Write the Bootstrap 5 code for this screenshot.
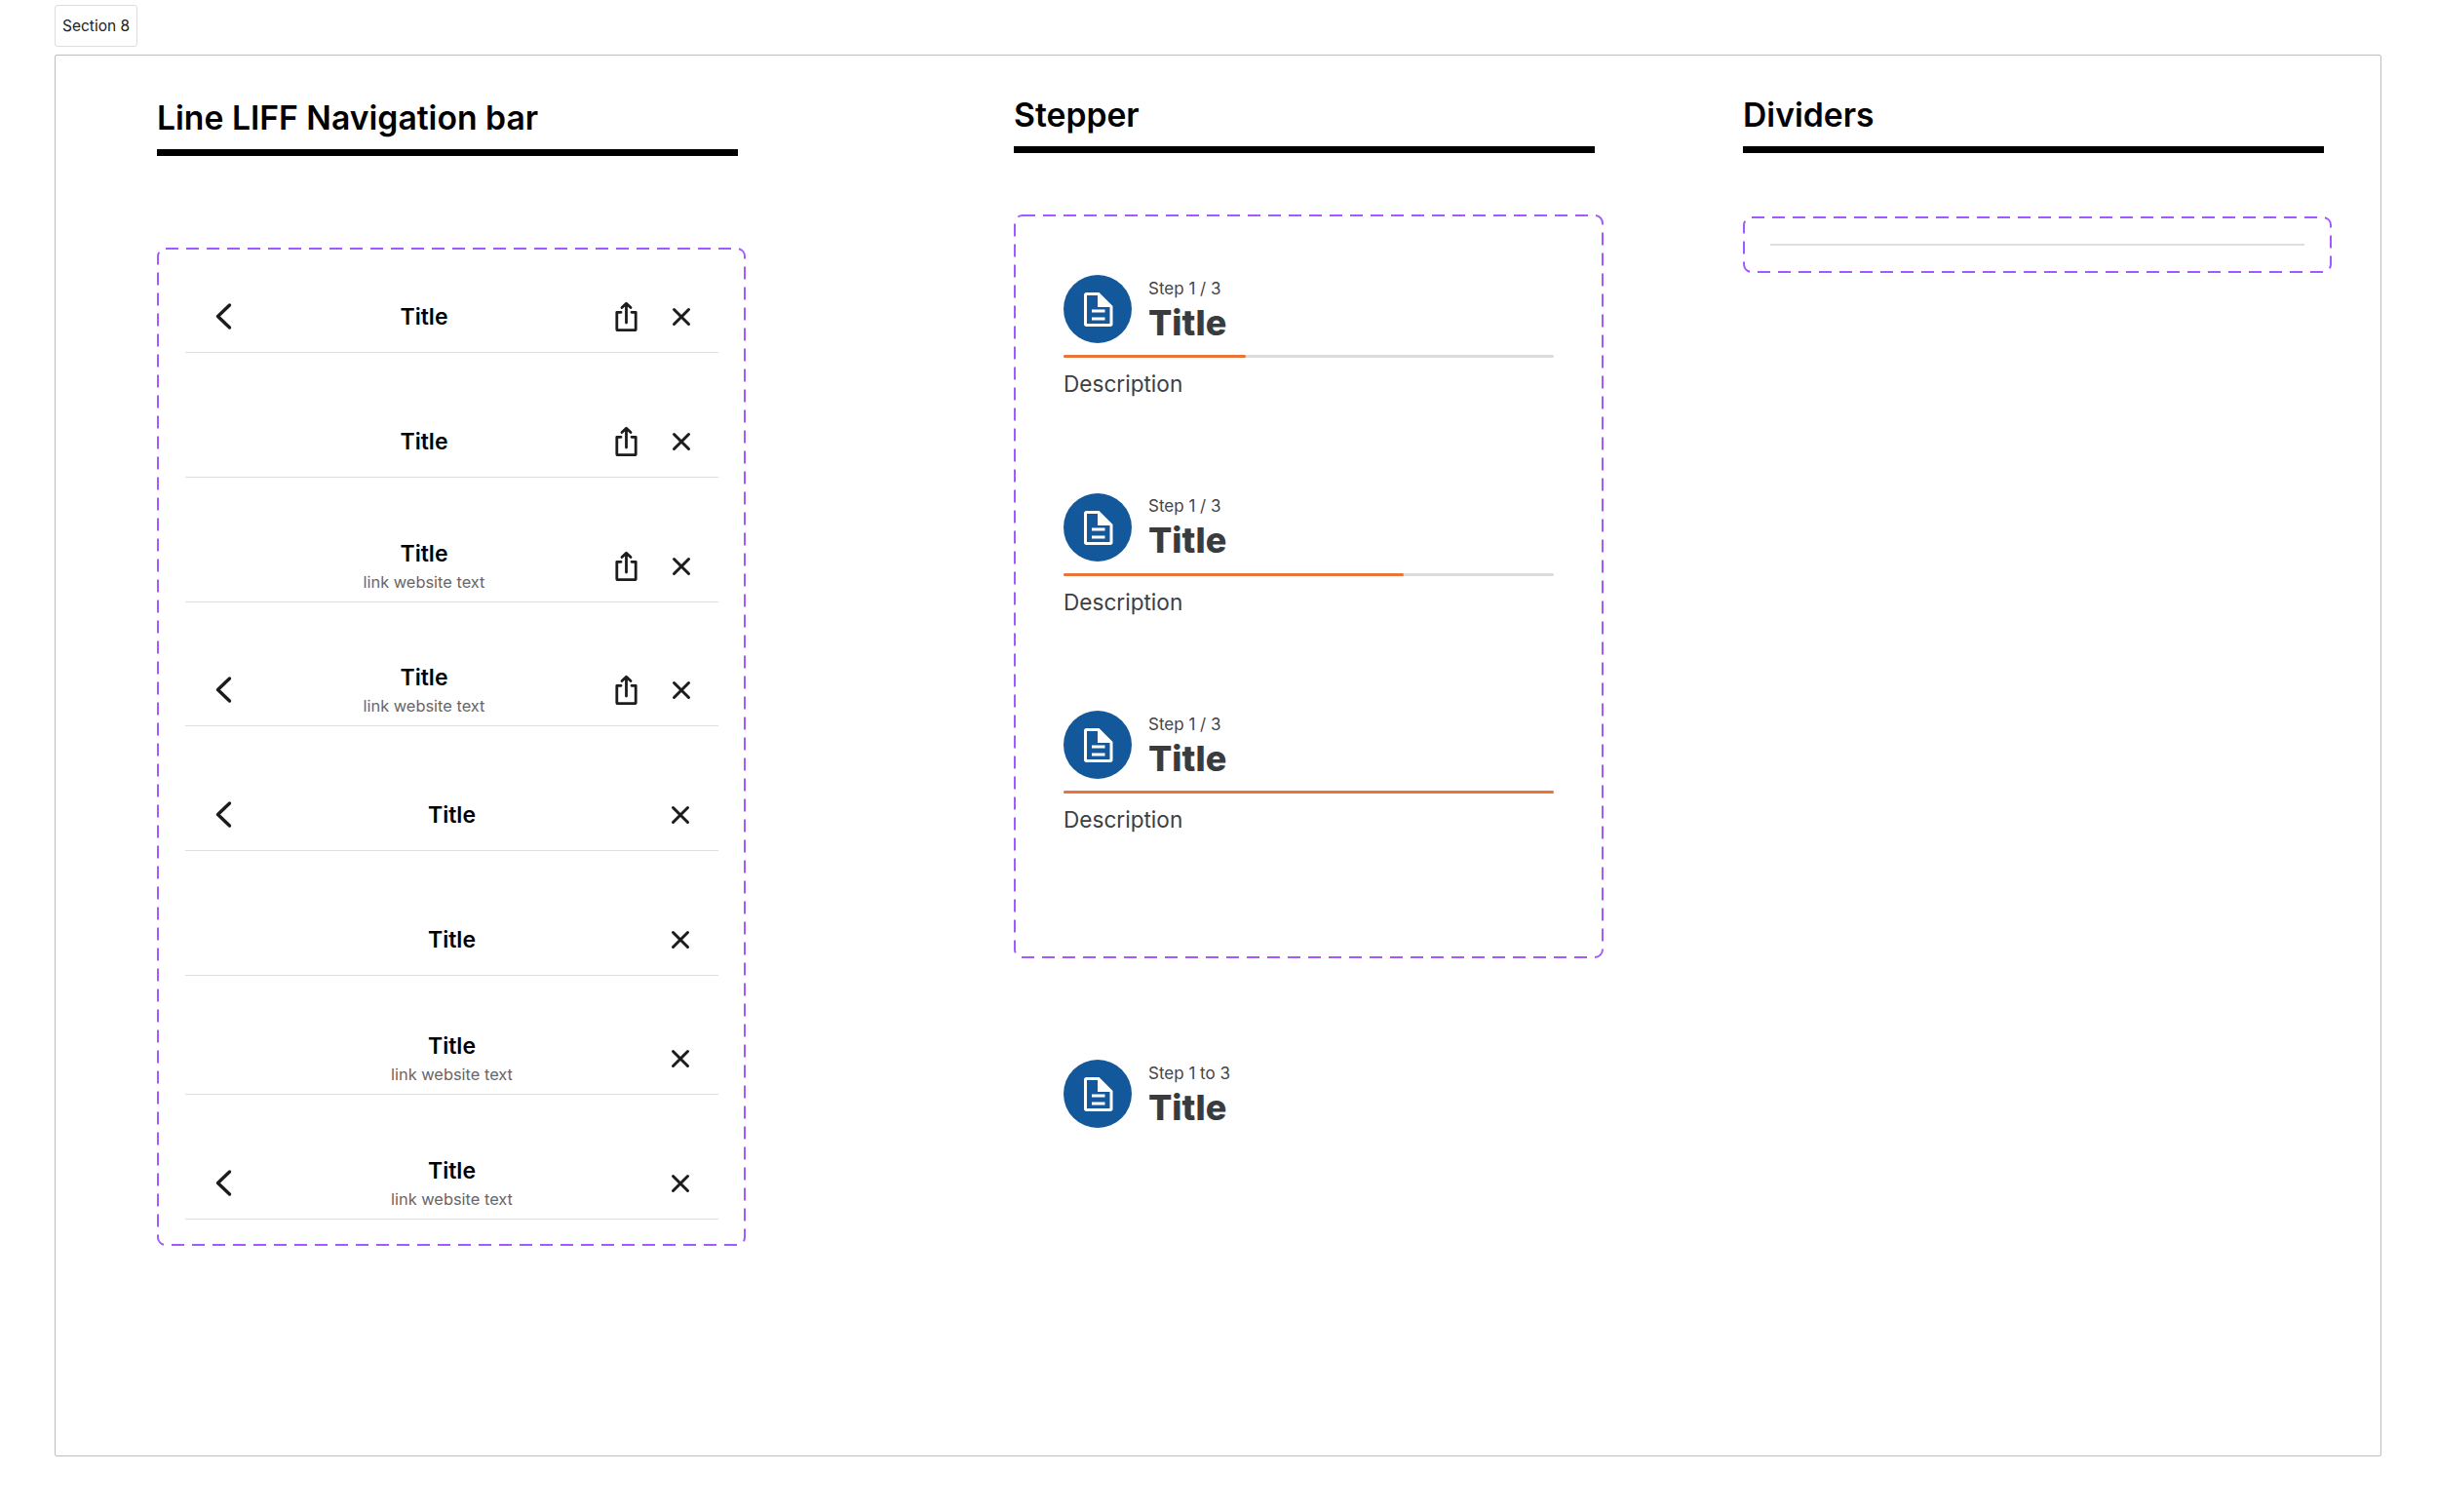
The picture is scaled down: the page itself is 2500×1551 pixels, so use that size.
<!DOCTYPE html>
<html lang="en">
<head>
    <meta charset="UTF-8">
    <meta name="viewport" content="width=device-width, initial-scale=1.0">
    <title>Section 8</title>
    <link href="https://cdn.jsdelivr.net/npm/bootstrap@5.3.0/dist/css/bootstrap.min.css" rel="stylesheet">
    <style>
        body {
            background-color: #fff;
            font-family: "Inter", "Liberation Sans", sans-serif;
            color: #000;
        }
        .section-tag {
            width: 85px;
            height: 43px;
            margin: 5px 0 0 56px;
            border: 1px solid #ddd;
            border-radius: 3px;
            font-size: 15.5px;
            color: #222;
        }
        .section-frame {
            width: 2387px;
            height: 1438px;
            margin: 8px 0 0 56px;
            border: 1px solid #bdbdbd;
            border-radius: 2px;
        }
        .col-nav { width: 604px; margin-left: 104px; }
        .col-stepper { width: 605px; margin-left: 275px; }
        .col-dividers { width: 604px; margin-left: 143px; }

        .sheet-title {
            font-size: 33.7px;
            font-weight: 600;
            line-height: 40px;
            margin: 0;
            padding-bottom: 12px;
            border-bottom: 7px solid #000;
            width: 596px;
        }
        .col-nav .sheet-title { margin-top: 44px; }
        .col-stepper .sheet-title, .col-dividers .sheet-title { margin-top: 41px; }

        .dash-box {
            background-image: url("data:image/svg+xml,%3Csvg xmlns='http://www.w3.org/2000/svg' width='100%25' height='100%25'%3E%3Crect x='1' y='1' rx='8' ry='8' style='width:calc(100%25 - 2px);height:calc(100%25 - 2px)' fill='none' stroke='%23a259ff' stroke-width='2' stroke-dasharray='13 8'/%3E%3C/svg%3E");
        }
        .nav-box { height: 1024px; margin-top: 94px; padding: 35px 28px 0 29px; }
        .step-box { height: 763px; margin-top: 63px; padding: 62px 50px 0 51px; }
        .divider-box { height: 58px; margin-top: 65px; padding: 28px 28px 0 28px; }

        .liff-bar {
            height: 73px;
            border-bottom: 1px solid #dedede;
            margin-bottom: 54.75px;
        }
        .liff-bar.bar-tight { margin-bottom: 49px; }
        .slot-left { width: 80px; }
        .slot-right { width: 137px; gap: 17px; padding-left: 3px; }
        .slot-close { width: 80px; padding-left: 2px; }
        .icon-cell { width: 40px; height: 40px; }
        .bar-title { font-size: 23px; font-weight: 600; line-height: 28px; }
        .bar-link { font-size: 16.4px; line-height: 22px; color: #666; margin-top: 4px; }

        .step-item { height: 223.5px; }
        .step-head { gap: 17px; height: 70px; }
        .step-circle { width: 70px; height: 70px; flex: none; }
        .step-text { margin-top: 4px; }
        .step-count { font-size: 17px; line-height: 20px; color: #444; }
        .step-title { font-size: 36px; font-weight: 800; line-height: 44px; color: #383c3f; margin-top: 3px; }
        .step-track {
            height: 3px;
            margin-top: 12px;
            width: 503px;
            background-color: #dcdcdc;
            border-radius: 2px;
        }
        .step-fill { height: 100%; background-color: #e8743a; border-radius: 2px; }
        .step-desc { font-size: 22.6px; line-height: 28px; color: #3c4043; margin-top: 13px; }
        .step-solo { margin: 104px 0 0 51px; }

        .plain-rule { height: 2px; background-color: #dedede; }
    </style>
</head>
<body>
    <svg width="0" height="0" class="d-block">
        <symbol id="ic-back" viewBox="0 0 40 40">
            <path d="M25.500 8 13.500 19.500 25.500 31" fill="none" stroke="#1c1c1c" stroke-width="3.400" stroke-linecap="round" stroke-linejoin="round"/>
        </symbol>
        <symbol id="ic-share" viewBox="0 0 40 40">
            <path d="M15 15.300H10.800V32.500c0 .7.5 1.200 1.200 1.200H29c.7 0 1.200-.5 1.200-1.200V15.300H26" fill="none" stroke="#1c1c1c" stroke-width="2.800" stroke-linecap="round" stroke-linejoin="round"/>
            <path d="M20.500 26V6.500M16 10.500 20.500 6.200 25 10.500" fill="none" stroke="#1c1c1c" stroke-width="2.800" stroke-linecap="round" stroke-linejoin="round"/>
        </symbol>
        <symbol id="ic-close" viewBox="0 0 40 40">
            <path d="M12.500 12.500l15 15M27.500 12.500l-15 15" fill="none" stroke="#1c1c1c" stroke-width="3" stroke-linecap="round"/>
        </symbol>
        <symbol id="ic-doc" viewBox="0 0 70 70">
            <circle cx="35" cy="35" r="35" fill="#14589c"/>
            <path d="M23.500 18H36.500L50.500 32V50.500C50.500 52 49.500 53 48 53H23.500C22 53 21 52 21 50.500V20.500C21 19 22 18 23.500 18Z" fill="#fff"/>
            <path d="M24 21H35V33H47.500V50H24Z" fill="#14589c"/>
            <path d="M29 35.500H42.500V38.500H29ZM29 43.500H42.500V46.500H29Z" fill="#fff"/>
        </symbol>
    </svg>

    <div class="section-tag d-flex align-items-center justify-content-center">Section 8</div>

    <div class="section-frame d-flex align-items-start">
        <!-- navigation bars -->
        <div class="col-nav">
            <h2 class="sheet-title">Line LIFF Navigation bar</h2>
            <div class="nav-box dash-box">
                <div class="liff-bar d-flex align-items-center">
                    <div class="slot-left d-flex justify-content-center"><svg class="icon-cell"><use href="#ic-back"/></svg></div>
                    <div class="flex-grow-1 text-center"><div class="bar-title">Title</div></div>
                    <div class="slot-right d-flex justify-content-center"><svg class="icon-cell"><use href="#ic-share"/></svg><svg class="icon-cell"><use href="#ic-close"/></svg></div>
                </div>
                <div class="liff-bar d-flex align-items-center">
                    <div class="slot-left"></div>
                    <div class="flex-grow-1 text-center"><div class="bar-title">Title</div></div>
                    <div class="slot-right d-flex justify-content-center"><svg class="icon-cell"><use href="#ic-share"/></svg><svg class="icon-cell"><use href="#ic-close"/></svg></div>
                </div>
                <div class="liff-bar d-flex align-items-center">
                    <div class="slot-left"></div>
                    <div class="flex-grow-1 text-center"><div class="bar-title">Title</div><div class="bar-link">link website text</div></div>
                    <div class="slot-right d-flex justify-content-center"><svg class="icon-cell"><use href="#ic-share"/></svg><svg class="icon-cell"><use href="#ic-close"/></svg></div>
                </div>
                <div class="liff-bar d-flex align-items-center">
                    <div class="slot-left d-flex justify-content-center"><svg class="icon-cell"><use href="#ic-back"/></svg></div>
                    <div class="flex-grow-1 text-center"><div class="bar-title">Title</div><div class="bar-link">link website text</div></div>
                    <div class="slot-right d-flex justify-content-center"><svg class="icon-cell"><use href="#ic-share"/></svg><svg class="icon-cell"><use href="#ic-close"/></svg></div>
                </div>
                <div class="liff-bar d-flex align-items-center">
                    <div class="slot-left d-flex justify-content-center"><svg class="icon-cell"><use href="#ic-back"/></svg></div>
                    <div class="flex-grow-1 text-center"><div class="bar-title">Title</div></div>
                    <div class="slot-close d-flex justify-content-center"><svg class="icon-cell"><use href="#ic-close"/></svg></div>
                </div>
                <div class="liff-bar bar-tight d-flex align-items-center">
                    <div class="slot-left"></div>
                    <div class="flex-grow-1 text-center"><div class="bar-title">Title</div></div>
                    <div class="slot-close d-flex justify-content-center"><svg class="icon-cell"><use href="#ic-close"/></svg></div>
                </div>
                <div class="liff-bar d-flex align-items-center">
                    <div class="slot-left"></div>
                    <div class="flex-grow-1 text-center"><div class="bar-title">Title</div><div class="bar-link">link website text</div></div>
                    <div class="slot-close d-flex justify-content-center"><svg class="icon-cell"><use href="#ic-close"/></svg></div>
                </div>
                <div class="liff-bar mb-0 d-flex align-items-center">
                    <div class="slot-left d-flex justify-content-center"><svg class="icon-cell"><use href="#ic-back"/></svg></div>
                    <div class="flex-grow-1 text-center"><div class="bar-title">Title</div><div class="bar-link">link website text</div></div>
                    <div class="slot-close d-flex justify-content-center"><svg class="icon-cell"><use href="#ic-close"/></svg></div>
                </div>
            </div>
        </div>

        <!-- stepper -->
        <div class="col-stepper">
            <h2 class="sheet-title">Stepper</h2>
            <div class="step-box dash-box">
                <div class="step-item">
                    <div class="step-head d-flex align-items-center">
                        <svg class="step-circle"><use href="#ic-doc"/></svg>
                        <div class="step-text"><div class="step-count">Step 1 / 3</div><div class="step-title">Title</div></div>
                    </div>
                    <div class="step-track"><div class="step-fill" style="width: 37.2%"></div></div>
                    <div class="step-desc">Description</div>
                </div>
                <div class="step-item">
                    <div class="step-head d-flex align-items-center">
                        <svg class="step-circle"><use href="#ic-doc"/></svg>
                        <div class="step-text"><div class="step-count">Step 1 / 3</div><div class="step-title">Title</div></div>
                    </div>
                    <div class="step-track"><div class="step-fill" style="width: 69.4%"></div></div>
                    <div class="step-desc">Description</div>
                </div>
                <div class="step-item">
                    <div class="step-head d-flex align-items-center">
                        <svg class="step-circle"><use href="#ic-doc"/></svg>
                        <div class="step-text"><div class="step-count">Step 1 / 3</div><div class="step-title">Title</div></div>
                    </div>
                    <div class="step-track"><div class="step-fill" style="width: 100%"></div></div>
                    <div class="step-desc">Description</div>
                </div>
            </div>
            <div class="step-head step-solo d-flex align-items-center">
                <svg class="step-circle"><use href="#ic-doc"/></svg>
                <div class="step-text"><div class="step-count">Step 1 to 3</div><div class="step-title">Title</div></div>
            </div>
        </div>

        <!-- dividers -->
        <div class="col-dividers">
            <h2 class="sheet-title">Dividers</h2>
            <div class="divider-box dash-box">
                <div class="plain-rule"></div>
            </div>
        </div>
    </div>
    <script src="https://cdn.jsdelivr.net/npm/bootstrap@5.3.0/dist/js/bootstrap.bundle.min.js"></script>
</body>
</html>
